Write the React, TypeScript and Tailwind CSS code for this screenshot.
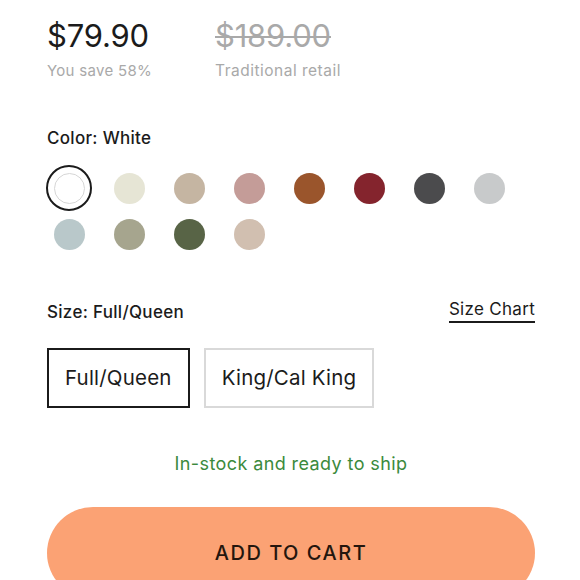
import React, { useState } from 'react'

const swatches = [
  '#ffffff',
  '#e6e5d5',
  '#c5b5a2',
  '#c49c98',
  '#9a552c',
  '#84242d',
  '#4b4b4d',
  '#c8cacb',
  '#b9c8ca',
  '#a6a58e',
  '#586446',
  '#d1bfb0',
]

function App() {
  const [color, setColor] = useState(0)
  const [size, setSize] = useState('Full/Queen')

  return (
    <div className="min-h-screen bg-white font-['Inter',sans-serif] text-[#1b1b1b]">
      <div className="w-[488px] ml-[47px] pt-[16px]">
        {/* price */}
        <div className="flex">
          <div className="w-[168px]">
            <div className="text-[31px] leading-[40px] tracking-[-0.2px]">$79.90</div>
            <div className="text-[15px] leading-[20px] mt-[5px] tracking-[0.3px] text-[#a9a9a9]">You save 58%</div>
          </div>
          <div>
            <div className="text-[31px] leading-[40px] tracking-[-0.2px] text-[#a9a9a9] line-through decoration-2">$189.00</div>
            <div className="text-[15.5px] leading-[20px] mt-[5px] tracking-[0.5px] text-[#a9a9a9]">Traditional retail</div>
          </div>
        </div>

        {/* color */}
        <div className="mt-[47px] text-[17px] leading-[20px] font-medium tracking-[0.3px]">Color: White</div>
        <div className="mt-[17px] grid grid-cols-[repeat(8,46px)] gap-x-[14px] -ml-px">
          {swatches.map((c, i) => (
            <button
              key={c}
              onClick={() => setColor(i)}
              className={
                'w-[46px] h-[46px] rounded-full flex items-center justify-center ' +
                (color === i ? 'border-2 border-[#1b1b1b]' : '')
              }
            >
              <span
                className={'w-[31px] h-[31px] rounded-full ' + (c === '#ffffff' ? 'border border-[#d6d6d6]' : '')}
                style={{ backgroundColor: c }}
              />
            </button>
          ))}
        </div>

        {/* size */}
        <div className="mt-[42px] flex items-end justify-between">
          <div className="text-[17px] leading-[20px] font-medium tracking-[0.3px]">Size: {size}</div>
          <a className="text-[17px] leading-[20px] tracking-[0.3px] border-b-2 border-[#1b1b1b] pb-[2px] mb-[-1px]">Size Chart</a>
        </div>
        <div className="mt-[26px] flex gap-[14px]">
          {['Full/Queen', 'King/Cal King'].map((s) => (
            <button
              key={s}
              onClick={() => setSize(s)}
              className={
                'h-[60px] px-[16px] text-[20.5px] tracking-[0.2px] ' +
                (size === s ? 'border-2 border-[#1b1b1b]' : 'border-2 border-[#d9d9d9]')
              }
            >
              {s}
            </button>
          ))}
        </div>

        <div className="mt-[42px] text-center text-[18px] tracking-[0.4px] text-[#3b8a3c]">In-stock and ready to ship</div>

        <button className="mt-[30px] w-full h-[92px] rounded-full bg-[#fba274] text-[20px] font-medium tracking-[1.5px] text-[#24160e]">
          ADD TO CART
        </button>
      </div>
    </div>
  )
}

export default App
